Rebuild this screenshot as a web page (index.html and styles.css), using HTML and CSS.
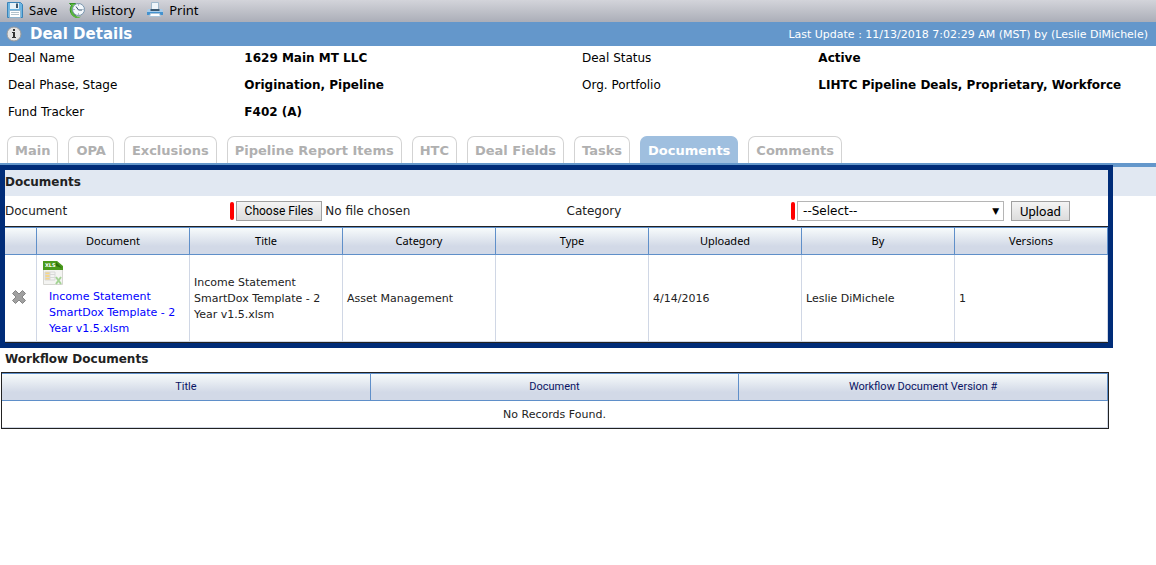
FILE: index.html
```html
<!DOCTYPE html>
<html lang="en">

<head>
    <meta charset="UTF-8">
    <meta name="viewport" content="width=device-width, initial-scale=1.0">
    <title>Deal Details</title>
    <link rel="stylesheet" href="styles.css">
</head>

<body>
    <div class="toolbar">
        <button type="button" class="tool">
            <svg width="16" height="16" viewBox="0 0 16 16">
                <path d="M0.500 0.500h13l2 2v13h-15z" fill="#6db5e2" stroke="#3a83b8" />
                <path d="M3 1h9v6H3z" fill="#e8f2f8" />
                <path d="M9 1.500h2V6H9z" fill="#41576b" />
                <path d="M2.500 8.500h11v7h-11z" fill="#fff" stroke="#8fb5cf" />
                <path d="M4 10.500h8M4 12.500h8" stroke="#b4c2cb" />
            </svg>
            Save
        </button>
        <button type="button" class="tool">
            <svg width="16" height="16" viewBox="0 0 16 16">
                <path d="M0.500 1.500h6v5L4.700 5C3 8 4 12 8 15.500 2 14.500-0.500 8 2.500 3.500z" fill="#5dbb3e" stroke="#35912a" />
                <circle cx="9.500" cy="7.500" r="6" fill="#f3f8fc" stroke="#7895ad" />
                <path d="M7 4.500l2.500 3.500H13" fill="none" stroke="#35516a" />
                <path d="M9.500 2.500v1M9.500 11.500v1M4.500 7.500h1M13.500 7.500h1" stroke="#68839a" />
                <path d="M2 10c2 4 6 5.500 10 4.500L10 16C6 16 2.500 14 2 10z" fill="#5dbb3e" />
            </svg>
            History
        </button>
        <button type="button" class="tool">
            <svg width="16" height="16" viewBox="0 0 16 16">
                <path d="M4.500 0.500h7v7h-7z" fill="#eef5fa" stroke="#9fb9cd" />
                <path d="M1 7h14l1 2v4H0V9z" fill="#a9cdea" />
                <path d="M0 10h16v3H0z" fill="#4392cf" />
                <path d="M3.500 7h9v2h-9z" fill="#3b5870" />
                <path d="M3.500 11.500h9l1 3h-11z" fill="#fff" stroke="#a8c4da" />
            </svg>
            Print
        </button>
    </div>

    <div class="title-bar">
        <svg width="16" height="16" viewBox="0 0 16 16">
            <circle cx="8" cy="8" r="7" fill="#e4e4e4" stroke="#9a9a9a" />
            <path d="M6 6.500h3M6 11.500h4" stroke="#333" />
            <path d="M8 6v6M8 3v2" stroke="#333" stroke-width="2" />
        </svg>
        <h1>Deal Details</h1>
        <span class="last-update">Last Update : 11/13/2018 7:02:29 AM (MST) by (Leslie DiMichele)</span>
    </div>

    <dl class="deal-info">
        <dt>Deal Name</dt>
        <dd>1629 Main MT LLC</dd>
        <dt>Deal Status</dt>
        <dd>Active</dd>
        <dt>Deal Phase, Stage</dt>
        <dd>Origination, Pipeline</dd>
        <dt>Org. Portfolio</dt>
        <dd>LIHTC Pipeline Deals, Proprietary, Workforce</dd>
        <dt>Fund Tracker</dt>
        <dd>F402 (A)</dd>
    </dl>

    <nav class="tabs">
        <a href="#">Main</a>
        <a href="#">OPA</a>
        <a href="#">Exclusions</a>
        <a href="#">Pipeline Report Items</a>
        <a href="#">HTC</a>
        <a href="#">Deal Fields</a>
        <a href="#">Tasks</a>
        <a href="#" class="active">Documents</a>
        <a href="#">Comments</a>
    </nav>

    <section class="documents">
        <h2 class="shaded">Documents</h2>
        <form class="upload-form">
            <label for="file">Document</label>
            <div class="field">
                <span class="required"></span>
                <input type="file" id="file" multiple>
            </div>
            <label for="category">Category</label>
            <div class="field">
                <span class="required"></span>
                <div class="select-wrap">
                    <select id="category">
                        <option>--Select--</option>
                    </select>
                </div>
                <button type="button" class="upload">Upload</button>
            </div>
        </form>
        <div class="grid-wrap">
            <table class="grid">
                <thead>
                    <tr>
                        <th class="icon-col"></th>
                        <th>Document</th>
                        <th>Title</th>
                        <th>Category</th>
                        <th>Type</th>
                        <th>Uploaded</th>
                        <th>By</th>
                        <th>Versions</th>
                    </tr>
                </thead>
                <tbody>
                    <tr class="doc-row">
                        <td class="icon-col">
                            <button type="button" class="delete" aria-label="Delete">
                                <svg width="14" height="14" viewBox="0 0 14 14">
                                    <path d="M3.500 0.500L7 4l3.500-3.500 3 3L10 7l3.500 3.500-3 3L7 10l-3.500 3.500-3-3L4 7 0.500 3.500z" fill="#a0a0a0" stroke="#858585" />
                                </svg>
                            </button>
                        </td>
                        <td>
                            <svg class="xls" width="20" height="24" viewBox="0 0 20 24">
                                <path d="M0.500 0.500h14l5 5v18h-19z" fill="#f4f4f2" stroke="#d6d6d2" />
                                <path d="M0 0h14l6 5v4H0z" fill="#4a9a1c" />
                                <path d="M13 1l6 6-6-2z" fill="#2d6d0c" />
                                <text x="2" y="6" class="xls-text">XLS</text>
                                <path d="M2 11h5v8H2z" fill="#f6d789" />
                                <path d="M2 11h10v8H2zM2 13.500h10M2 16.500h10M7 11v8" fill="none" stroke="#d8d8d8" />
                                <path d="M13 16l5 7M18 16l-5 7" stroke="#a4d394" stroke-width="2" />
                            </svg>
                            <a href="#" class="doc-link">Income Statement SmartDox Template - 2 Year v1.5.xlsm</a>
                        </td>
                        <td>Income Statement SmartDox Template - 2 Year v1.5.xlsm</td>
                        <td>Asset Management</td>
                        <td></td>
                        <td>4/14/2016</td>
                        <td>Leslie DiMichele</td>
                        <td>1</td>
                    </tr>
                </tbody>
            </table>
        </div>
    </section>

    <section class="workflow">
        <h2>Workflow Documents</h2>
        <div class="grid-wrap">
            <table class="grid">
                <thead>
                    <tr>
                        <th>Title</th>
                        <th>Document</th>
                        <th>Workflow Document Version #</th>
                    </tr>
                </thead>
                <tbody>
                    <tr>
                        <td colspan="3" class="empty">No Records Found.</td>
                    </tr>
                </tbody>
            </table>
        </div>
    </section>
</body>

</html>
```
FILE: styles.css
```css
* {
    box-sizing: border-box;
}

body {
    margin: 0;
    background-color: #fff;
    color: #222;
    font-family: Verdana, "DejaVu Sans", sans-serif;
    font-size: 12px;
}

h1,
h2,
dl,
dd {
    margin: 0;
}

.toolbar {
    display: flex;
    gap: 12px;
    height: 22px;
    padding: 0 7px 2px;
    background: linear-gradient(#d3d4da, #abaeb8);
}

.tool {
    display: flex;
    align-items: center;
    gap: 6px;
    padding: 0;
    border: none;
    background: none;
    color: #000;
    font: 13px "Noto Sans", sans-serif;
}

.title-bar {
    display: flex;
    align-items: center;
    gap: 8px;
    height: 24px;
    padding: 0 8px 0 6px;
    background-color: #6497cb;
    color: #fff;
}

.title-bar h1 {
    font-size: 15px;
}

.last-update {
    margin-left: auto;
    font-size: 11px;
}

.deal-info {
    display: grid;
    grid-template-columns: 7fr 10fr 7fr 10fr;
    row-gap: 2px;
    padding-left: 8px;
    margin-bottom: 11px;
    color: #000;
    line-height: 25px;
}

.deal-info dd {
    font-weight: bold;
    white-space: nowrap;
}

.tabs {
    display: flex;
    gap: 10px;
    padding: 0 7px;
    border-bottom: 4px solid #6497cb;
}

.tabs a {
    height: 27px;
    padding: 0 7px;
    border: 1px solid #d3d3d3;
    border-bottom: none;
    border-radius: 7px 7px 0 0;
    color: #b0b0b0;
    font-size: 13px;
    font-weight: bold;
    line-height: 27px;
    text-decoration: none;
    white-space: nowrap;
}

.tabs .active {
    border-color: #9fbfdf;
    background-color: #9fbfdf;
    color: #fff;
}

h2 {
    padding-left: 5px;
    font-size: 12px;
}

.shaded {
    padding-top: 1px;
    background-color: #e1e8f2;
    line-height: 28px;
}

.documents {
    position: relative;
}

/* navy frame drawn over the edges of the documents block */
.documents::after {
    content: "";
    position: absolute;
    top: -2px;
    right: 43px;
    bottom: -5px;
    left: 0;
    border: 5px solid #002c78;
    pointer-events: none;
}

.upload-form {
    display: grid;
    grid-template-columns: 2fr 3fr 2fr 3fr;
    align-items: center;
    height: 30px;
    padding: 0 28px 0 5px;
}

.field {
    display: flex;
    align-items: center;
    gap: 2px;
}

.required {
    width: 4px;
    height: 18px;
    border-radius: 2px;
    background-color: #f00;
}

input[type="file"] {
    color: #222;
    font: 12px "DejaVu Sans", sans-serif;
}

input[type="file"]::file-selector-button,
.upload {
    height: 20px;
    padding: 0 8px;
    border: 1px solid #a0a0a0;
    border-radius: 0;
    background: linear-gradient(#f4f4f4, #dcdcdc);
    color: #000;
    font: 12px Roboto, sans-serif;
}

input[type="file"]::file-selector-button {
    margin-right: 3px;
}

.select-wrap {
    position: relative;
    flex: 0 1 207px;
}

.select-wrap::after {
    content: "▼";
    position: absolute;
    top: 5px;
    right: 5px;
    color: #000;
    font-size: 9px;
    line-height: 10px;
    pointer-events: none;
}

select {
    display: block;
    width: 100%;
    height: 20px;
    padding: 0 5px;
    border: 1px solid #b5b5b5;
    border-radius: 0;
    appearance: none;
    background-color: #fff;
    color: #000;
    font: 12px "DejaVu Sans", sans-serif;
}

.upload {
    margin-left: 5px;
    font-size: 13px;
}

.grid-wrap {
    padding: 0 47px 0 1px;
}

.grid {
    width: 100%;
    border: 1px solid #222;
    border-spacing: 0;
    table-layout: fixed;
}

.grid th {
    height: 28px;
    padding: 0 4px 2px;
    border: 1px solid #5f8fc9;
    border-left: none;
    background: linear-gradient(#f7fbfb, #d2d9e7 70%);
    color: #000;
    font: 11px "Noto Sans", sans-serif;
}

.grid td {
    height: 27px;
    padding: 2px 4px 0;
    border: 1px solid #d0d7e5;
    border-top: none;
    border-left: none;
    font-size: 11px;
    line-height: 16px;
}

.grid .icon-col {
    width: 35px;
    padding: 0;
    text-align: center;
}

.grid .doc-row td {
    height: 87px;
}

.delete {
    display: block;
    margin: 0 auto;
    padding: 0;
    border: none;
    background: none;
}

.xls {
    display: block;
    margin: 0 0 4px 2px;
}

.xls-text {
    fill: #fff;
    font-size: 5px;
    font-weight: bold;
}

.doc-link {
    display: block;
    margin-left: 8px;
    color: #00f;
    text-decoration: none;
}

.workflow h2 {
    padding-top: 4px;
    padding-bottom: 1px;
    line-height: 24px;
}

.workflow .grid th {
    padding-bottom: 1px;
    color: #0a1464;
    font: 11px Roboto, sans-serif;
}

.grid .empty {
    text-align: center;
}
```
